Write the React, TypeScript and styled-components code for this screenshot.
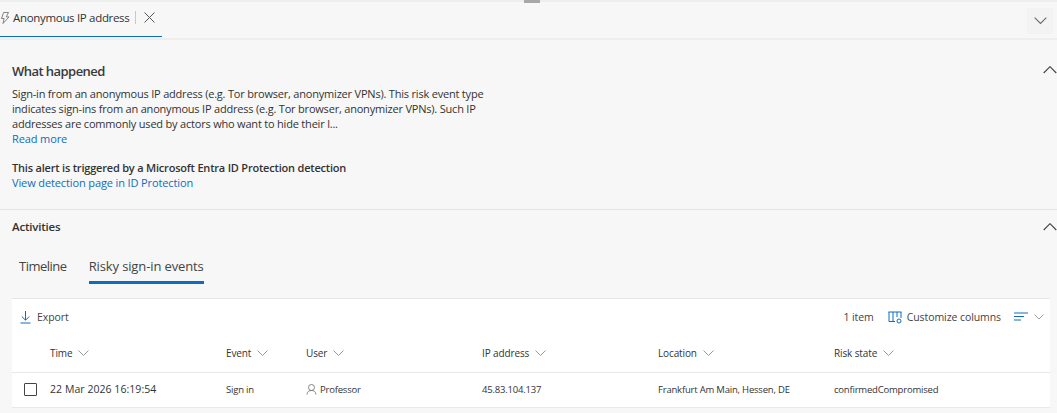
import { createGlobalStyle } from "styled-components";
import styled from "styled-components";

const Global = createGlobalStyle`
  html, body { margin: 0; padding: 0; }
  body { background: #f7f7f7; font-family: "Open Sans", "Noto Sans", "Liberation Sans", sans-serif; color: #333; }
`;

const Page = styled.div`
  width: 1057px;
  height: 413px;
  overflow: hidden;
  background: #f7f7f7;
  display: flex;
  flex-direction: column;
`;

const TopStrip = styled.div`
  height: 2px;
  background: #eeeeee;
  display: flex;
  justify-content: center;
  flex: none;
`;

const Thumb = styled.div`
  width: 16px;
  height: 3px;
  background: #a8a8a8;
  margin-left: 7px;
`;

const TabBar = styled.div`
  height: 36px;
  border-bottom: 2px solid #eeeeee;
  display: flex;
  justify-content: space-between;
  flex: none;
`;

const PanelTab = styled.div`
  width: 162px;
  height: 35px;
  box-sizing: border-box;
  border-bottom: 1px solid #0f6cbd;
  display: flex;
  align-items: center;
  padding-bottom: 3px;
  font-size: 11.5px;
  letter-spacing: -0.32px;
  font-weight: 500;
  color: #333;
`;

const TabDivider = styled.span`
  width: 1px;
  height: 13px;
  background: #c8c8c8;
  margin: 0 8px 0 6px;
`;

const CollapseButton = styled.div`
  width: 26px;
  height: 26px;
  background: #f3f3f3;
  margin: 6px 4px 0 0;
  display: flex;
  align-items: center;
  justify-content: center;
`;

const Section = styled.section`
  position: relative;
  padding: 0 12px;
`;

const WhatHappened = styled(Section)`
  height: 170px;
  border-bottom: 1px solid #e4e4e4;
  flex: none;
  padding-top: 22px;
  box-sizing: border-box;
`;

const Heading = styled.h2`
  margin: 0 0 5px;
  font-size: 13px;
  line-height: 19px;
  font-weight: 600;
  letter-spacing: -0.55px;
  color: #3a3a3a;
`;

const Body = styled.div`
  width: 510px;
  font-size: 11px;
  line-height: 15px;
  letter-spacing: -0.2px;
  color: #333;
  white-space: nowrap;
`;

const Link = styled.div`
  color: #0f6cbd;
  letter-spacing: -0.12px;
`;

const Strong = styled.div`
  margin-top: 14px;
  font-weight: 600;
  color: #333;
  letter-spacing: -0.2px;
`;

const Toggle = styled.div`
  position: absolute;
  right: 0;
  top: ${(p: { $top: number }) => p.$top}px;
  width: 14px;
  height: 8px;
  display: flex;
`;

const Activities = styled(Section)`
  flex: 1;
  padding-top: 8px;
`;

const SubHeading = styled.h3`
  margin: 0;
  font-size: 11.5px;
  line-height: 17px;
  font-weight: 600;
  letter-spacing: -0.2px;
  color: #333;
`;

const Tabs = styled.div`
  display: flex;
  gap: 22px;
  padding-left: 7px;
  margin-top: 22px;
  height: 27px;
`;

const TabItem = styled.div<{ $active?: boolean }>`
  font-size: 13px;
  line-height: 17px;
  letter-spacing: ${(p) => (p.$active ? "-0.12px" : "-0.5px")};
  height: 27px;
  padding-top: 1px;
  box-sizing: border-box;
  color: #444;
  font-weight: ${(p) => (p.$active ? 500 : 400)};
  border-bottom: ${(p) => (p.$active ? "3px solid #0f6cbd" : "none")};
`;

const Card = styled.div`
  margin-top: 14px;
  background: #fff;
  width: 1038px;
  height: 110px;
  border-top: 1px solid #e6e6e6;
  box-sizing: border-box;
`;

const Toolbar = styled.div`
  height: 36px;
  display: flex;
  align-items: center;
  justify-content: space-between;
  padding: 0 6px 0 8px;
  font-size: 10.5px;
  letter-spacing: -0.08px;
  color: #444;
`;

const ToolGroup = styled.div`
  display: flex;
  align-items: center;
`;

const Row = styled.div<{ $head?: boolean }>`
  display: grid;
  grid-template-columns: 38px 176px 80px 176px 176px 176px 1fr;
  align-items: center;
  height: ${(p) => (p.$head ? 38 : 35)}px;
  box-sizing: border-box;
  border-bottom: 1px solid #e8e8e8;
  font-size: 9.5px;
  letter-spacing: -0.2px;
  color: #333;
  padding-bottom: 2px;
  ${(p) => p.$head && "font-weight: 500; font-size: 10px; letter-spacing: -0.12px; padding-bottom: 1px;"}
`;

const HeadCell = styled.div`
  display: flex;
  align-items: center;
  gap: 6px;
`;

const TimeCell = styled.div`
  font-size: 10.5px;
  letter-spacing: 0.05px;
  font-weight: 500;
`;

const Check = styled.div`
  width: 11px;
  height: 11px;
  border: 1px solid #444;
  border-radius: 1px;
  margin-left: 12px;
`;

const UserCell = styled.div`
  display: flex;
  align-items: center;
  gap: 3px;
`;

const Chevron = ({ size = 11, color = "#8a8a8a", up = false }: { size?: number; color?: string; up?: boolean }) => (
  <svg width={size} height={size * 0.55} viewBox="0 0 20 11" fill="none">
    <path d={up ? "M1 10L10 1l9 9" : "M1 1l9 9 9-9"} stroke={color} strokeWidth="1.6" />
  </svg>
);

const columns = ["Event", "User", "IP address", "Location", "Risk state"];

export default function App() {
  return (
    <Page>
      <Global />
      <TopStrip>
        <Thumb />
      </TopStrip>
      <TabBar>
        <PanelTab>
          <svg width="12" height="14" viewBox="0 0 12 14" fill="none" style={{ marginRight: 1, marginLeft: 0 }}>
            <path d="M7 1.5H3.6L1.5 7.5h2.6L3 12.5l6-6.6H6.2L8.5 1.5z" stroke="#777" strokeWidth="0.9" />
          </svg>
          Anonymous IP address
          <TabDivider />
          <svg width="11" height="11" viewBox="0 0 11 11" fill="none">
            <path d="M.5.5l10 10M10.5.5l-10 10" stroke="#555" strokeWidth="1" />
          </svg>
        </PanelTab>
        <CollapseButton>
          <Chevron size={13} color="#666" />
        </CollapseButton>
      </TabBar>
      <WhatHappened>
        <Heading>What happened</Heading>
        <Toggle $top={26}>
          <Chevron size={14} color="#444" up />
        </Toggle>
        <Body>
          Sign-in from an anonymous IP address (e.g. Tor browser, anonymizer VPNs). This risk event type
          <br />
          indicates sign-ins from an anonymous IP address (e.g. Tor browser, anonymizer VPNs). Such IP
          <br />
          addresses are commonly used by actors who want to hide their l...
          <Link>Read more</Link>
          <Strong>This alert is triggered by a Microsoft Entra ID Protection detection</Strong>
          <Link>View detection page in ID Protection</Link>
        </Body>
      </WhatHappened>
      <Activities>
        <SubHeading>Activities</SubHeading>
        <Toggle $top={13}>
          <Chevron size={14} color="#444" up />
        </Toggle>
        <Tabs>
          <TabItem>Timeline</TabItem>
          <TabItem $active>Risky sign-in events</TabItem>
        </Tabs>
        <Card>
          <Toolbar>
            <ToolGroup>
              <svg width="11" height="14" viewBox="0 0 11 14" fill="none" style={{ marginRight: 6 }}>
                <path d="M5.5 1v9M1.8 6.5l3.7 3.7 3.7-3.7M.5 13h10" stroke="#0f6cbd" strokeWidth="1" />
              </svg>
              Export
            </ToolGroup>
            <ToolGroup>
              1 item
              <svg width="14" height="13" viewBox="0 0 14 13" fill="none" style={{ margin: "0 5px 0 14px" }}>
                <path d="M.5 1h13M1 1v9.5h6M5 1v9.5M9 1v5M13 1v6" stroke="#0f6cbd" strokeWidth="1" />
                <circle cx="11" cy="10" r="2" stroke="#0f6cbd" strokeWidth="1" />
              </svg>
              Customize columns
              <svg width="14" height="10" viewBox="0 0 14 10" fill="none" style={{ margin: "0 6px 0 13px" }}>
                <path d="M0 1h14M0 4.5h10M0 8h7" stroke="#0f6cbd" strokeWidth="1" />
              </svg>
              <Chevron size={10} color="#888" />
            </ToolGroup>
          </Toolbar>
          <Row $head>
            <span />
            <HeadCell>
              Time <Chevron />
            </HeadCell>
            {columns.map((c) => (
              <HeadCell key={c}>
                {c} <Chevron />
              </HeadCell>
            ))}
          </Row>
          <Row>
            <Check />
            <TimeCell>22 Mar 2026 16:19:54</TimeCell>
            <div>Sign in</div>
            <UserCell>
              <svg width="11" height="11" viewBox="0 0 11 11" fill="none">
                <circle cx="5.5" cy="3.5" r="3" stroke="#777" strokeWidth="0.9" />
                <path d="M1 10.5c.3-3 2-4 4.5-4s4.2 1 4.5 4" stroke="#777" strokeWidth="0.9" />
              </svg>
              Professor
            </UserCell>
            <div>45.83.104.137</div>
            <div>Frankfurt Am Main, Hessen, DE</div>
            <div>confirmedCompromised</div>
          </Row>
        </Card>
      </Activities>
    </Page>
  );
}
